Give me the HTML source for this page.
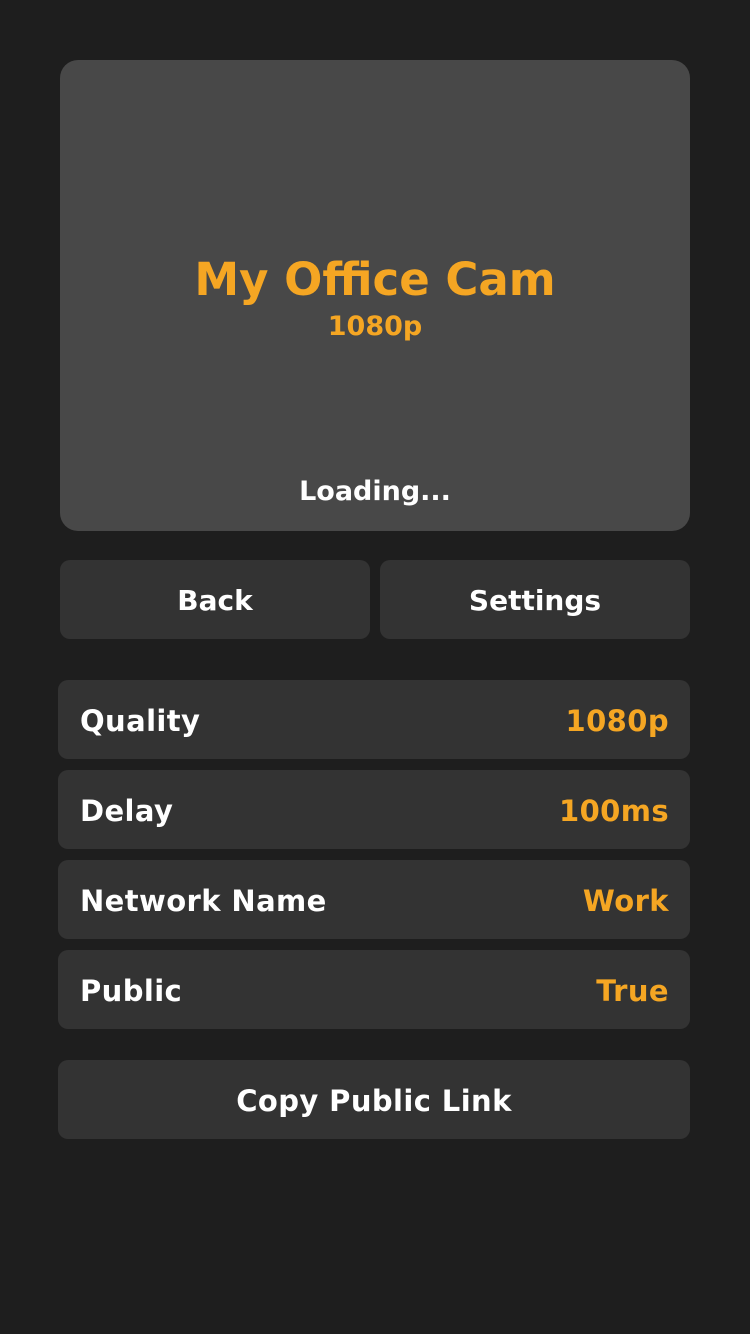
<!DOCTYPE html>
<html><head><meta charset="utf-8"><style>
html,body{margin:0;padding:0;background:#1e1e1e;width:750px;height:1334px;overflow:hidden;font-family:"DejaVu Sans","Liberation Sans",sans-serif;font-weight:bold;}
.abs{position:absolute;box-sizing:border-box}
.card{left:60px;top:60px;width:630px;height:471px;background:#484848;border-radius:18px}
.t{position:absolute;left:0;width:100%;text-align:center}
.btn{background:#333;border-radius:10px;color:#fff;font-size:28px;display:flex;align-items:center;justify-content:center}
.row{left:58px;width:632px;height:79px;background:#333;border-radius:10px;display:flex;align-items:center;justify-content:space-between;padding:2px 21px 0 22px;font-size:29px;color:#fff}
.row span{letter-spacing:0.4px}
.row span:last-child{color:#f5a623}
</style></head><body>
<div class="abs card">
<div class="t" style="top:193px;font-size:45px;color:#f5a623;letter-spacing:0">My Office Cam</div>
<div class="t" style="top:251px;font-size:27px;color:#f5a623">1080p</div>
<div class="t" style="top:416px;font-size:27px;color:#fff">Loading...</div>
</div>
<div class="abs btn" style="left:60px;top:560px;width:310px;height:79px;padding-top:2px">Back</div>
<div class="abs btn" style="left:380px;top:560px;width:310px;height:79px;padding-top:2px">Settings</div>
<div class="abs row" style="top:680px"><span>Quality</span><span>1080p</span></div>
<div class="abs row" style="top:770px"><span>Delay</span><span>100ms</span></div>
<div class="abs row" style="top:860px"><span>Network Name</span><span>Work</span></div>
<div class="abs row" style="top:950px"><span>Public</span><span>True</span></div>
<div class="abs btn" style="left:58px;top:1060px;width:632px;height:79px;font-size:29px;padding-top:2px;letter-spacing:0.4px">Copy Public Link</div>
</body></html>
